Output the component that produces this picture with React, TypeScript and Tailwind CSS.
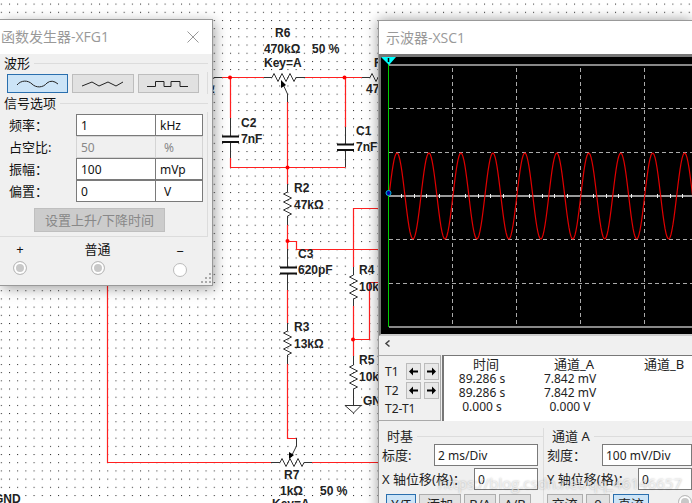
import type { ReactNode } from "react";

const cjk = "font-['Noto_Sans','Noto_Sans_CJK_SC',sans-serif]";
const title = "font-['Open_Sans','Noto_Sans_CJK_SC',sans-serif]";

function hZig(x: number, y: number) {
  return `M${x} ${y}l2 -4l4 8l4 -8l4 8l4 -8l4 8l2 -4`;
}
function vZig(x: number, y: number) {
  return `M${x} ${y}l-4 2l8 4l-8 4l8 4l-8 4l8 4l-4 2`;
}

const labels: [number, number, string][] = [
  [205, 93, "Ω"],
  [275, 37, "R6"],
  [264, 53, "470kΩ"],
  [312, 53, "50 %"],
  [264, 67, "Key=A"],
  [241, 127, "C2"],
  [241, 143, "7nF"],
  [356, 135, "C1"],
  [356, 151, "7nF"],
  [374, 67, "R1"],
  [366, 93, "47kΩ"],
  [294, 192, "R2"],
  [294, 209, "47kΩ"],
  [298, 258, "C3"],
  [298, 274, "620pF"],
  [359, 274, "R4"],
  [359, 291, "10kΩ"],
  [294, 331, "R3"],
  [294, 348, "13kΩ"],
  [359, 364, "R5"],
  [359, 381, "10kΩ"],
  [363, 405, "GND"],
  [284, 479, "R7"],
  [280, 495, "1kΩ"],
  [320, 495, "50 %"],
  [272, 508, "Key=A"],
  [-6, 503, "GND"],
];

const nodes = [
  [230, 77.5],
  [344.5, 77.5],
  [287.5, 167.5],
  [287.5, 241],
  [353, 339.5],
];

function Schematic() {
  return (
    <svg className="absolute inset-0 h-full w-full" aria-label="schematic">
      <defs>
        <pattern id="dots" x="0.8" y="3.6" width="8.19" height="8.19" patternUnits="userSpaceOnUse">
          <rect width="1" height="1" fill="#222" />
        </pattern>
      </defs>
      <rect width="100%" height="100%" fill="url(#dots)" />
      <g fill="none" stroke="#ff2020" strokeWidth="1.2">
        <path d="M222 77.5H264M305 77.5H362M230.5 77V118M230.5 158V167.5H345.5M345.5 77V127" />
        <path d="M287.5 102V184M287.5 225V249M287.5 290V323M287.5 364V438.5H296" />
        <path d="M287.5 241.5H296.5V249.5H379M379 208.5H353.5V267M353.5 306V356M353.5 339.5H369.5V282.5H379" />
        <path d="M107.5 280V462.5H271M312 462.5H379" />
      </g>
      <g fill="none" stroke="#333" strokeWidth="1">
        <path d="M212 80L214 77.5H222M264 77.5H272M296 77.5H305M362 77.5H370M230.5 118V136M230.5 142V158M345.5 127V144M345.5 150V167" />
        <path d="M282 82L287.5 94V102M287.5 184V192M287.5 216V225M287.5 249V267M287.5 273V290M287.5 323V331M287.5 355V364" />
        <path d="M353.5 267V275M353.5 299V306M353.5 356V365M353.5 389V405M345 405.5H361L353.5 413Z" />
        <path d="M271 462.5H280M304 462.5H312M296.5 438V446L291 457" />
        <path d={hZig(272, 77.5)} />
        <path d={hZig(370, 77.5)} />
        <path d={hZig(280, 462.5)} />
        <path d={vZig(287.5, 192)} />
        <path d={vZig(287.5, 331)} />
        <path d={vZig(353.5, 275)} />
        <path d={vZig(353.5, 365)} />
      </g>
      <path
        d="M222 136.5H239M222 142H239M337 144.5H354M337 150H354M280 267.5H297M280 273.5H297"
        stroke="#111"
        strokeWidth="2"
      />
      <path d="M281 80L286 85L281 88ZM289 459L289 452L294 455Z" fill="#000" />
      {nodes.map(([x, y]) => (
        <circle key={`${x}-${y}`} cx={x} cy={y} r="2" fill="#f00" />
      ))}
      <g className="font-['Liberation_Sans',Arial,sans-serif] text-xs font-bold" fill="#222">
        {labels.map(([x, y, text]) => (
          <text key={`${x}-${y}`} x={x} y={y}>
            {text}
          </text>
        ))}
      </g>
    </svg>
  );
}

function WaveButton({ label, d, active }: { label: string; d: string; active?: boolean }) {
  return (
    <button
      aria-label={label}
      className={`flex h-[19px] flex-1 items-center justify-center border ${
        active ? "border-[#2a6fae] bg-[#cce4f7]" : "border-[#bdbdbd] bg-[#e1e1e1]"
      }`}
    >
      <svg width="42" height="10" fill="none" stroke="#222">
        <path d={d} />
      </svg>
    </button>
  );
}

function SignalRow({ id, label, value, unit, disabled }: { id: string; label: string; value: string; unit: string; disabled?: boolean }) {
  const tone = disabled ? "border-[#d4d4d4] bg-[#f0f0f0] text-[#888]" : "border-[#7a7a7a] bg-white text-[#111]";
  return (
    <div className="flex h-[22px] items-center">
      <label htmlFor={id} className="w-[67px] text-[13px] leading-5">
        {label}
      </label>
      <input id={id} defaultValue={value} disabled={disabled} className={`h-[22px] w-20 border px-1 ${tone}`} />
      <input
        aria-label={`${label} 单位`}
        defaultValue={unit}
        disabled={disabled}
        className={`-ml-px h-[22px] w-12 border ${unit.length > 1 ? "px-1" : "px-2"} ${tone}`}
      />
    </div>
  );
}

function Terminal({ label, empty, className }: { label: string; empty?: boolean; className: string }) {
  return (
    <label className={`flex w-10 flex-col items-center text-[13px] leading-4 ${className}`}>
      {label}
      <input
        type="radio"
        name={`terminal${label}`}
        className={`mt-1 size-[14px] appearance-none rounded-full border border-[#bbb] ${
          empty ? "bg-white" : "bg-[#c8c8c8] shadow-[inset_0_0_0_2px_#fff]"
        }`}
      />
    </label>
  );
}

function FunctionGenerator() {
  return (
    <section className={`absolute top-[19px] left-0 w-[213px] border-t border-r border-b border-[#999] bg-[#f0f0f0] text-xs text-[#111] shadow-[2px_3px_12px_rgba(0,0,0,0.35)] ${cjk}`}>
      <header className="flex h-[34px] items-center justify-between bg-white pr-3">
        <h2 className={`pl-px text-sm text-[#999] ${title}`}>函数发生器-XFG1</h2>
        <button aria-label="关闭" className="text-[#999]">
          <svg width="14" height="14" stroke="currentColor">
            <path d="M1.5 1.5L12.5 12.5M12.5 1.5L1.5 12.5" />
          </svg>
        </button>
      </header>
      <div className="pr-1">
        <div className="flex h-[18px] items-center gap-1 pl-1 text-[13px] leading-4">
          <h3>波形</h3>
          <i className="h-px flex-1 bg-[#dcdcdc]" />
        </div>
        <div className="border-r border-[#dcdcdc]">
          <div className="flex gap-1 pt-0.5 pr-2 pb-px pl-[7px]">
            <WaveButton active label="正弦波" d="M0 6C4 1 11 1 15 5S26 9 30 4Q35 0 41 5" />
            <WaveButton label="三角波" d="M0 7L10 3L17 7L26 3L34 7L41 3" />
            <WaveButton label="方波" d="M0 7.5H8.5V2.5H17V7.5H24V2.5H33V7.5H41" />
          </div>
        </div>
        <div className="flex h-[18px] items-center gap-1 pl-1 text-[13px] leading-4">
          <h3>信号选项</h3>
          <i className="h-px flex-1 bg-[#dcdcdc]" />
        </div>
        <div className="border-r border-b border-[#dcdcdc] pt-0.5 pb-1 pl-[9px]">
          <SignalRow id="freq" label="频率：" value="1" unit="kHz" />
          <SignalRow id="duty" label="占空比:" value="50" unit="%" disabled />
          <SignalRow id="amp" label="振幅：" value="100" unit="mVp" />
          <SignalRow id="bias" label="偏置：" value="0" unit="V" />
          <button disabled className="mt-[6px] ml-[25px] block h-6 w-[131px] border border-[#bfbfbf] bg-[#ccc] text-[13px] leading-5 text-[#888]">
            设置上升/下降时间
          </button>
        </div>
      </div>
      <div className="flex h-12 items-start justify-between pr-3">
        <Terminal label="+" className="pt-1" />
        <Terminal label="普通" className="mr-[5px] pt-1" />
        <Terminal label="−" empty className="pt-[6px]" />
      </div>
      <svg className="absolute right-0 bottom-0 text-[#aaa]" width="12" height="12" fill="currentColor">
        <path d="M1 8h2v2H1zM5 8h2v2H5zM9 8h2v2H9zM5 4h2v2H5zM9 4h2v2H9zM9 0h2v2H9z" />
      </svg>
    </section>
  );
}

function ScopeScreen() {
  let wave = "M8 139";
  for (let x = 0; x <= 1600; x++) {
    wave += `L${8 + x} ${(139 - 43 * Math.sin((x * 2 * Math.PI) / 31.96)).toFixed(1)}`;
  }
  const columns = Array.from({ length: 24 }, (_, i) => Math.floor(8 + (i + 1) * 64.1) - 0.5);
  const ticks = Array.from({ length: 120 }, (_, i) => Math.round(8 + (i + 1) * 12.8) - 0.5);
  return (
    <div className="border-t-3 border-l-2 border-[#777] border-b-2 border-b-[#ccc]">
      <svg className="block h-[277px] w-full bg-black" aria-label="scope trace">
        <g stroke="#aaa" strokeDasharray="4 3">
          {columns.map((x) => (
            <path key={x} d={`M${x} 11V270`} />
          ))}
          {[51.5, 95.5, 182.5, 226.5].map((y) => (
            <line key={y} x1="8" x2="100%" y1={y} y2={y} />
          ))}
        </g>
        <line x1="8" x2="100%" y1="8" y2="8" stroke="#888" strokeWidth="2" />
        <line x1="8" x2="100%" y1="139" y2="139" stroke="#999" strokeWidth="2" />
        <line x1="8" x2="100%" y1="270" y2="270" stroke="#888" strokeWidth="2" />
        {ticks.map((x) => (
          <path key={x} d={`M${x} 137V141`} stroke="#eee" />
        ))}
        <path d={wave} fill="none" stroke="#e00000" strokeWidth="1.2" />
        <path d="M7.5 0V270" stroke="#0c0" />
        <path d="M0 0H15L8 8Z" fill="#0ff" />
        <path d="M7.5 1V5" stroke="#000" strokeWidth="1.5" />
        <circle cx="7.5" cy="136" r="2.5" fill="#00a" stroke="#0bd" />
      </svg>
    </div>
  );
}

function ArrowButton({ left }: { left?: boolean }) {
  return (
    <button aria-label={left ? "左移" : "右移"} className="flex h-[17px] w-[15px] items-center justify-center border border-[#bbb] bg-[#e8e8e8]">
      <svg width="9" height="9">
        <path d={left ? "M0 4.5L4 0.5V3.5H9V5.5H4V8.5Z" : "M9 4.5L5 0.5V3.5H0V5.5H5V8.5Z"} />
      </svg>
    </button>
  );
}

function CursorRow({ label }: { label: string }) {
  return (
    <div className="flex items-center gap-[3px]">
      <span className="w-[18px]">{label}</span>
      <ArrowButton left />
      <ArrowButton />
    </div>
  );
}

function Readout() {
  const rows = [
    ["89.286 s", "7.842 mV"],
    ["89.286 s", "7.842 mV"],
    ["0.000 s", "0.000 V"],
  ];
  return (
    <div className="flex-1 overflow-hidden border-t border-l-2 border-[#777] bg-white">
      <table className="w-[264px] table-fixed text-center">
        <thead>
          <tr className="h-4 text-[13px] leading-4">
            <th className="w-[84px] font-normal">时间</th>
            <th className="w-[92px] font-normal">通道_A</th>
            <th className="font-normal">通道_B</th>
          </tr>
        </thead>
        <tbody>
          {rows.map(([time, a], i) => (
            <tr key={i} className="h-[14px] leading-[14px]">
              <td className="pr-2">{time}</td>
              <td className="pr-2">{a}</td>
              <td />
            </tr>
          ))}
        </tbody>
      </table>
    </div>
  );
}

function Group({ name, className, children }: { name: string; className: string; children: ReactNode }) {
  return (
    <div className={className}>
      <div className="flex h-4 items-center gap-1 pl-2 text-[13px] leading-4">
        <h3>{name}</h3>
        <i className="h-px flex-1 bg-[#dcdcdc]" />
      </div>
      {children}
    </div>
  );
}

function Field({ id, label, value, labelClass }: { id: string; label: string; value: string; labelClass: string }) {
  return (
    <div className="mb-0.5 flex h-[22px] items-center pl-[3px]">
      <label htmlFor={id} className={`shrink-0 text-[13px] leading-5 whitespace-nowrap ${labelClass}`}>
        {label}
      </label>
      <input id={id} defaultValue={value} className="h-[22px] min-w-0 flex-1 border border-[#7a7a7a] bg-white px-[3px]" />
    </div>
  );
}

function ModeButton({ children, active, className }: { children: ReactNode; active?: boolean; className: string }) {
  return (
    <button className={`h-5 border text-[13px] leading-4 ${active ? "border-[#2a6fae] bg-[#cce4f7]" : "border-[#adadad] bg-[#e1e1e1]"} ${className}`}>
      {children}
    </button>
  );
}

function Oscilloscope() {
  return (
    <section className={`absolute top-5 right-0 left-[378px] border-t border-l border-[#999] bg-[#f0f0f0] text-xs text-[#222] shadow-[0_0_12px_rgba(0,0,0,0.4)] ${cjk}`}>
      <header className="flex h-[33px] items-center bg-white pl-[7px]">
        <h2 className={`text-sm text-[#999] ${title}`}>示波器-XSC1</h2>
      </header>
      <ScopeScreen />
      <div className="flex h-[19px] pt-1 pl-[5px]">
        <button aria-label="向左滚动" className="h-2">
          <svg width="7" height="8" fill="none" stroke="#444" strokeWidth="1.5">
            <path d="M5.5 0.5L2 3.5L5.5 6.5" />
          </svg>
        </button>
      </div>
      <div className="flex h-[66px] gap-px">
        <div className="flex w-[62px] flex-col gap-[2px] border-t border-r border-b border-[#aaa] pt-[7px] pl-[6px] leading-4">
          <CursorRow label="T1" />
          <CursorRow label="T2" />
          <span>T2-T1</span>
        </div>
        <Readout />
      </div>
      <div className="flex overflow-hidden pt-[7px]">
        <Group name="时基" className="w-[165px] shrink-0 border-r border-[#dcdcdc]">
          <div className="pr-[5px]">
            <Field id="timebase" label="标度:" value="2 ms/Div" labelClass="w-[52px]" />
            <Field id="xpos" label="X 轴位移(格)：" value="0" labelClass="w-[92px]" />
          </div>
          <div className="flex gap-[3px] pt-0.5 pl-[7px]">
            <ModeButton active className="w-[30px]">Y/T</ModeButton>
            <ModeButton className="w-[42px]">添加</ModeButton>
            <ModeButton className="w-8">B/A</ModeButton>
            <ModeButton className="w-8">A/B</ModeButton>
          </div>
        </Group>
        <Group name="通道 A" className="min-w-0 flex-1">
          <Field id="scale" label="刻度：" value="100 mV/Div" labelClass="w-[55px]" />
          <Field id="ypos" label="Y 轴位移(格)：" value="0" labelClass="w-[91px]" />
          <div className="flex gap-[3px] pt-0.5 pl-[3px]">
            <ModeButton className="w-[38px]">交流</ModeButton>
            <ModeButton className="w-[26px]">0</ModeButton>
            <ModeButton active className="w-[38px]">直流</ModeButton>
            <input
              type="radio"
              aria-label="通道 A 端子"
              className="mt-px ml-[26px] size-[14px] shrink-0 appearance-none rounded-full border border-[#bbb] bg-[#c8c8c8] shadow-[inset_0_0_0_2px_#fff]"
            />
          </div>
        </Group>
      </div>
    </section>
  );
}

export default function App() {
  return (
    <main className="relative h-screen w-full overflow-hidden bg-white">
      <Schematic />
      <FunctionGenerator />
      <Oscilloscope />
      <p className={`absolute right-[10px] bottom-2 text-[15px] leading-6 text-white/60 [text-shadow:0_0_2px_rgba(0,0,0,0.3)] ${title}`}>
        https://blog.csdn.net/qq_46146657
      </p>
    </main>
  );
}
